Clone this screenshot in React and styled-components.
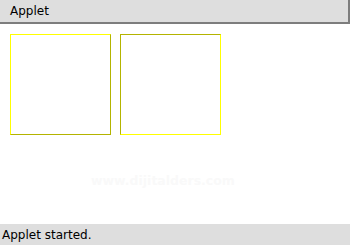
import React from 'react'
import styled, { createGlobalStyle } from 'styled-components'

const GlobalStyle = createGlobalStyle`
  html, body {
    margin: 0;
    padding: 0;
    background: #ffffff;
  }
  #root {
    width: 350px;
    height: 245px;
  }
`

const Frame = styled.div`
  width: 350px;
  height: 245px;
  display: flex;
  flex-direction: column;
  font-family: 'DejaVu Sans', 'Liberation Sans', sans-serif;
  color: #000;
  overflow: hidden;
`

const TitleBar = styled.div`
  box-sizing: border-box;
  height: 24px;
  background: #dedede;
  border-bottom: 2px solid #7d7d7d;
  border-right: 2px solid #7d7d7d;
  padding-left: 10px;
  font-size: 12px;
  line-height: 22px;
`

const Canvas = styled.div`
  position: relative;
  flex: 1;
  display: flex;
  align-items: flex-start;
  gap: 9px;
  padding: 10px 0 0 10px;
  background: #ffffff;
`

const Box = styled.div`
  box-sizing: border-box;
  width: 101px;
  height: 101px;
  border: 1px solid;
  border-color: ${p => p.raised
    ? '#ffff00 #b4b400 #b4b400 #ffff00'
    : '#b4b400 #ffff00 #ffff00 #b4b400'};
`

const Watermark = styled.div`
  position: absolute;
  left: 91px;
  top: 149px;
  font-size: 12.5px;
  font-weight: bold;
  color: #f9f9f9;
`

const StatusBar = styled.div`
  box-sizing: border-box;
  height: 21px;
  background: #dedede;
  padding-left: 2px;
  font-size: 12px;
  line-height: 22px;
`

export default function App () {
  return (
    <Frame>
      <GlobalStyle />
      <TitleBar>Applet</TitleBar>
      <Canvas>
        <Box raised />
        <Box />
        <Watermark>www.dijitalders.com</Watermark>
      </Canvas>
      <StatusBar>Applet started.</StatusBar>
    </Frame>
  )
}
